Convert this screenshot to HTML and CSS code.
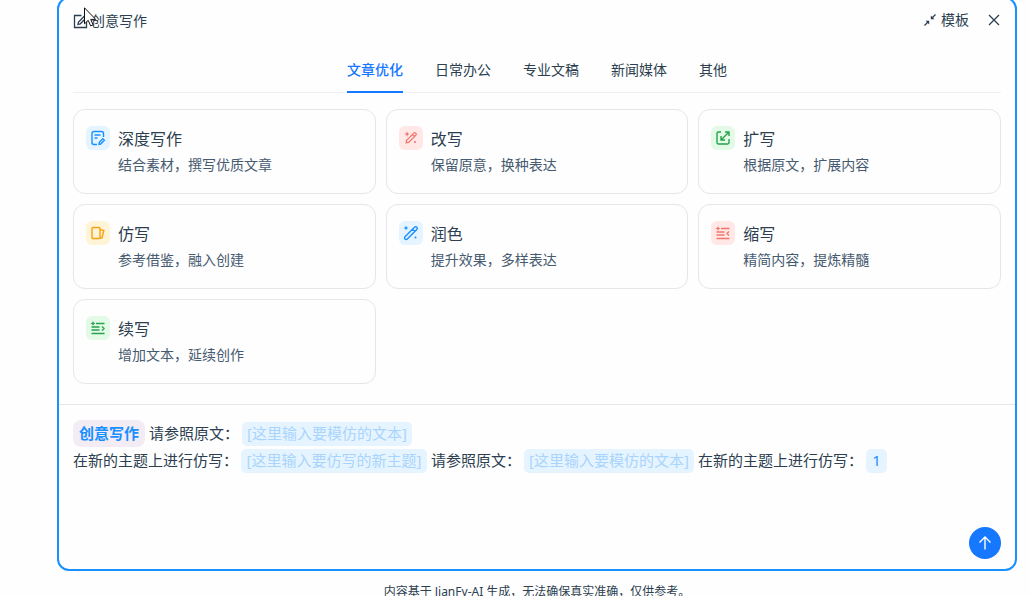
FILE: index.html
```html
<!DOCTYPE html>
<html lang="zh-CN">
<head>
    <meta charset="UTF-8">
    <meta name="viewport" content="width=device-width, initial-scale=1.0">
    <title>创意写作</title>
    <link rel="stylesheet" href="styles.css">
</head>
<body>
<div class="page">
    <main class="panel">
        <header class="panel_head">
            <h1 class="panel_title">
                <svg class="icon_edit" viewBox="0 0 16 16" width="16" height="16">
                    <path d="M8.5 2.500H1.500v12h12V8"/>
                    <path d="M5 11.300l.5-2.300L12 2.500l1.800 1.800-6.500 6.500z"/>
                </svg>
                <span>创意写作</span>
            </h1>
            <div class="panel_tools">
                <button class="tool" type="button">
                    <svg viewBox="0 0 12 12" width="12" height="12">
                        <path d="M11.500.5L8 4M.5 11.500L4 8"/>
                        <path class="fill" d="M6.800 1.600v3.600h3.600zM1.600 6.800h3.600v3.600z"/>
                    </svg>
                    <span>模板</span>
                </button>
                <button class="tool" type="button" aria-label="关闭">
                    <svg viewBox="0 0 12 12" width="12" height="12"><path d="M1 1l10 10M11 1L1 11"/></svg>
                </button>
            </div>
        </header>

        <nav class="tabs">
            <button class="tab tab_active" type="button">文章优化</button>
            <button class="tab" type="button">日常办公</button>
            <button class="tab" type="button">专业文稿</button>
            <button class="tab" type="button">新闻媒体</button>
            <button class="tab" type="button">其他</button>
        </nav>

        <section class="cards">
            <button class="card" type="button">
                <span class="card_icon blue">
                    <svg viewBox="0 0 16 16" width="16" height="16">
                        <path d="M7 14.500H4a2 2 0 0 1-2-2v-9a2 2 0 0 1 2-2h7.500a2 2 0 0 1 2 2V7M4.500 5h6M4.500 8h3"/>
                        <path d="M9 14.300l.3-2 3.500-3.500 1.500 1.500-3.600 3.700z"/>
                    </svg>
                </span>
                <span class="card_body">
                    <span class="card_title">深度写作</span>
                    <span class="card_text">结合素材，撰写优质文章</span>
                </span>
            </button>
            <button class="card" type="button">
                <span class="card_icon red">
                    <svg viewBox="0 0 16 16" width="14" height="14">
                        <path d="M2.500 13.500l.5-2.800 8.200-8.200a1.600 1.600 0 0 1 2.300 2.300L5.300 13zM9.700 4l2.300 2.300"/>
                        <path class="fill" d="M3.500.5l.9 2.100 2.100.9-2.100.9-.9 2.100-.9-2.100L.5 3.500l2.100-.9z"/>
                        <circle class="fill" cx="12.500" cy="12.500" r="1.200"/>
                    </svg>
                </span>
                <span class="card_body">
                    <span class="card_title">改写</span>
                    <span class="card_text">保留原意，换种表达</span>
                </span>
            </button>
            <button class="card" type="button">
                <span class="card_icon green">
                    <svg viewBox="0 0 16 16" width="16" height="16">
                        <path d="M6 2H3.500A1.500 1.500 0 0 0 2 3.500v9A1.500 1.500 0 0 0 3.500 14h9a1.500 1.500 0 0 0 1.500-1.500V9"/>
                        <path d="M6 10l8-8M10 2h4v4M6 6v4h4"/>
                    </svg>
                </span>
                <span class="card_body">
                    <span class="card_title">扩写</span>
                    <span class="card_text">根据原文，扩展内容</span>
                </span>
            </button>
            <button class="card" type="button">
                <span class="card_icon yellow">
                    <svg viewBox="0 0 16 16" width="16" height="16">
                        <rect x="2" y="2.500" width="8" height="11" rx="1"/>
                        <path d="M10 4.500l3.800.9-1.900 7.600H10"/>
                    </svg>
                </span>
                <span class="card_body">
                    <span class="card_title">仿写</span>
                    <span class="card_text">参考借鉴，融入创建</span>
                </span>
            </button>
            <button class="card" type="button">
                <span class="card_icon blue">
                    <svg viewBox="0 0 16 16" width="16" height="16">
                        <path d="M2 14a1.600 1.600 0 0 1 0-2.300l9.500-9.500a1.600 1.600 0 0 1 2.300 2.300L4.300 14a1.600 1.600 0 0 1-2.300 0zM9.500 4.300l2.300 2.300"/>
                        <path class="fill" d="M3 .5l.7 1.800 1.800.7-1.800.7L3 5.500l-.7-1.800L.5 3l1.800-.7z"/>
                        <circle class="fill" cx="12.500" cy="12.500" r="1"/>
                    </svg>
                </span>
                <span class="card_body">
                    <span class="card_title">润色</span>
                    <span class="card_text">提升效果，多样表达</span>
                </span>
            </button>
            <button class="card" type="button">
                <span class="card_icon red">
                    <svg viewBox="0 0 16 16" width="16" height="16">
                        <path d="M6 3.500h8.500M1.500 7h8M1.500 10h8M1.500 13.500h13M14 6.500l-2 2 2 2"/>
                        <path class="fill" d="M3 1l.8 1.700 1.700.8-1.700.8L3 6l-.8-1.700L.5 3.500l1.700-.8z"/>
                    </svg>
                </span>
                <span class="card_body">
                    <span class="card_title">缩写</span>
                    <span class="card_text">精简内容，提炼精髓</span>
                </span>
            </button>
            <button class="card" type="button">
                <span class="card_icon green">
                    <svg viewBox="0 0 16 16" width="16" height="16">
                        <path d="M6 3.500h8.500M1.500 7h8M1.500 10h8M1.500 13.500h13M12 6.500l2 2-2 2"/>
                        <path class="fill" d="M3 1l.8 1.700 1.700.8-1.700.8L3 6l-.8-1.700L.5 3.500l1.700-.8z"/>
                    </svg>
                </span>
                <span class="card_body">
                    <span class="card_title">续写</span>
                    <span class="card_text">增加文本，延续创作</span>
                </span>
            </button>
        </section>

        <form class="editor">
            <div class="prompt">
                <span class="badge">创意写作</span><label for="source1">请参照原文：</label><input class="slot" id="source1" type="text" placeholder="[这里输入要模仿的文本]"><br>
                <label for="topic1">在新的主题上进行仿写：</label><input class="slot slot_wide" id="topic1" type="text" placeholder="[这里输入要仿写的新主题]"><label for="source2">请参照原文：</label><input class="slot" id="source2" type="text" placeholder="[这里输入要模仿的文本]"><label for="topic2">在新的主题上进行仿写：</label><input class="slot slot_short" id="topic2" type="text" value="1">
            </div>
            <button class="send" type="button" aria-label="发送">
                <svg viewBox="0 0 16 16" width="16" height="16"><path d="M8 14.500V2M2.500 7.500L8 2l5.500 5.500"/></svg>
            </button>
        </form>
    </main>
    <footer class="note">内容基于 JianFy-AI 生成，无法确保真实准确，仅供参考。</footer>
</div>
<svg class="pointer" viewBox="0 0 13 20" width="13" height="20">
    <path d="M.5.800v16l3.700-3.500 2.400 5.600 2.500-1-2.400-5.500h5z"/>
</svg>
</body>
</html>
```

FILE: styles.css
```css
* {
    box-sizing: border-box;
    margin: 0;
    padding: 0;
}
html {
    overflow: hidden;
}
body {
    font-family: "Noto Sans", "Noto Sans CJK SC", sans-serif;
    font-size: 14px;
    line-height: 22px;
    color: #2c3e50;
    background: #fefefe;
}
button, input {
    font: inherit;
    color: inherit;
    border: 0;
    background: none;
}
button {
    cursor: pointer;
}
svg {
    display: block;
    flex: none;
    fill: none;
    stroke: currentColor;
}
.fill {
    fill: currentColor;
    stroke: none;
}

/* the page is a little taller than the window */
.page {
    display: flex;
    flex-direction: column;
    height: calc(100vh + 8px);
    margin: -3px 13px 0 57px;
}
.panel {
    flex: 1;
    display: flex;
    flex-direction: column;
    border: 2px solid #1890ff;
    border-radius: 12px;
}
.panel_head {
    display: flex;
    justify-content: space-between;
    align-items: flex-start;
    height: 44px;
    margin-bottom: 4px;
    padding: 10px 15px 0 14px;
}
.panel_title {
    display: flex;
    align-items: center;
    gap: 2px;
    padding-top: 1px;
    font-size: 14px;
    font-weight: 400;
}
.icon_edit {
    stroke-width: 1.3;
}
.panel_tools {
    display: flex;
    gap: 19px;
}
.tool {
    display: flex;
    align-items: center;
    gap: 5px;
}
.tool svg {
    stroke-width: 1.3;
}

.tabs {
    display: flex;
    justify-content: center;
    gap: 32px;
    margin: 0 14px;
    box-shadow: inset 0 -1px #f0f0f0;
}
.tab {
    padding: 12px 0;
}
.tab_active {
    color: #1677ff;
    font-weight: 500;
    box-shadow: inset 0 -2px #1677ff;
}

.cards {
    display: grid;
    grid-template-columns: repeat(3, 1fr);
    gap: 10px;
    padding: 16px 14px 20px;
    border-bottom: 1px solid #e6e6e6;
}
.card {
    display: flex;
    align-items: flex-start;
    gap: 8px;
    padding: 16px 12px 15px;
    border: 1px solid #e6e6e9;
    border-radius: 12px;
    text-align: left;
}
.card_icon {
    display: flex;
    justify-content: center;
    align-items: center;
    width: 24px;
    height: 24px;
    border-radius: 6px;
}
.card_icon svg {
    stroke-width: 1.4;
}
.blue {
    color: #1890ff;
    background: #e6f4ff;
}
.red {
    color: #f2756d;
    background: #ffe8e6;
}
.green {
    color: #27a34b;
    background: #e2fae6;
}
.yellow {
    color: #faa010;
    background: #fff5d6;
}
.card_body {
    display: flex;
    flex-direction: column;
}
.card_title {
    font-size: 16px;
    line-height: 26px;
}
.card_text {
    line-height: 26px;
    color: #465a70;
}

.editor {
    flex: 1;
    display: flex;
    flex-direction: column;
    justify-content: space-between;
    padding: 15px 14px 10px;
}
.prompt {
    font-size: 15px;
    line-height: 27px;
}
.badge {
    display: inline-block;
    margin-right: 4px;
    padding: 0 6px;
    border-radius: 8px;
    font-weight: 700;
    color: #1890ff;
    background: #f3ecf5;
}
.slot {
    width: 170px;
    height: 24px;
    margin: 0 4px 0 3px;
    border-radius: 5px;
    text-align: center;
    color: #1890ff;
    background: #e6f4ff;
}
.slot::placeholder {
    color: #a9d4fd;
    opacity: 1;
}
.slot_wide {
    width: 186px;
}
.slot_short {
    width: 21px;
}
.send {
    align-self: flex-end;
    display: flex;
    justify-content: center;
    align-items: center;
    width: 32px;
    height: 32px;
    border-radius: 50%;
    color: #fff;
    background: #1677ff;
}
.send svg {
    stroke-width: 1.4;
}

.note {
    padding-top: 12px;
    font-size: 12px;
    line-height: 18px;
    text-align: center;
}
.pointer {
    position: absolute;
    left: 84px;
    top: 7px;
    fill: #fff;
    stroke: #111;
}
```
